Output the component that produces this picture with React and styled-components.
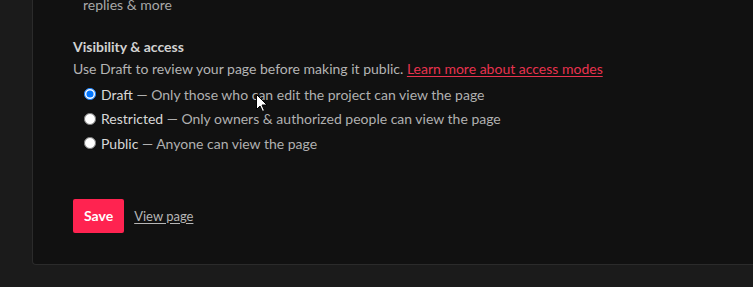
import styled, { createGlobalStyle } from 'styled-components';

const GlobalStyle = createGlobalStyle`
  html, body {
    margin: 0;
    padding: 0;
    background: #1b1b1b;
    font-family: Lato, "Liberation Sans", sans-serif;
    overflow: hidden;
  }
`;

const Page = styled.div`
  position: relative;
  height: 287px;
  padding-left: 32px;
`;

const Card = styled.section`
  background: #111111;
  border: 1px solid #2b2b2b;
  border-top: none;
  border-right: none;
  border-radius: 0 0 0 4px;
  margin-right: -20px;
  padding: 0 0 31px 40px;
  margin-top: -5px;
`;

const Tail = styled.div`
  font-size: 14px;
  line-height: 20px;
  color: #a8a8a8;
  padding-left: 10px;
`;

const Heading = styled.h3`
  margin: 22px 0 0;
  font-size: 14px;
  line-height: 20px;
  font-weight: 700;
  color: #d2d2d2;
`;

const Help = styled.p`
  margin: 2px 0 0;
  font-size: 14px;
  line-height: 20px;
  color: #b4b4b4;
`;

const Link = styled.a`
  color: #e8334f;
  text-decoration: underline;
  text-underline-offset: 2px;
`;

const Options = styled.div`
  margin-top: 3px;
  padding-left: 10px;
`;

const Option = styled.label`
  display: flex;
  align-items: center;
  height: 24.5px;
  font-size: 14px;
  color: #b0b0b0;
  input {
    margin: 0 5px 0 1px;
    width: 12px;
    height: 12px;
  }
  b {
    font-weight: 400;
    color: #d8d8d8;
  }
`;

const Actions = styled.div`
  display: flex;
  align-items: center;
  gap: 10px;
  margin-top: 43px;
`;

const SaveButton = styled.button`
  height: 34px;
  padding: 0 11px;
  border: none;
  border-radius: 2px;
  background: #ff2350;
  color: #ffffff;
  font-family: inherit;
  font-size: 14px;
  font-weight: 700;
`;

const ViewLink = styled.a`
  font-size: 13px;
  color: #b6b6b6;
  text-decoration: underline;
  text-underline-offset: 2px;
`;

const Cursor = styled.svg`
  position: absolute;
  left: 256px;
  top: 99px;
`;

const options = [
  { label: 'Draft', text: 'Only those who can edit the project can view the page', checked: true },
  { label: 'Restricted', text: 'Only owners & authorized people can view the page' },
  { label: 'Public', text: 'Anyone can view the page' },
];

export default function App() {
  return (
    <Page>
      <GlobalStyle />
      <Card>
        <Tail>replies &amp; more</Tail>
        <Heading>Visibility &amp; access</Heading>
        <Help>
          Use Draft to review your page before making it public.{' '}
          <Link href="#">Learn more about access modes</Link>
        </Help>
        <Options>
          {options.map((o) => (
            <Option key={o.label}>
              <input type="radio" name="access" defaultChecked={o.checked} />
              <span>
                <b>{o.label}</b> — {o.text}
              </span>
            </Option>
          ))}
        </Options>
        <Actions>
          <SaveButton>Save</SaveButton>
          <ViewLink href="#">View page</ViewLink>
        </Actions>
      </Card>
      <Cursor width="12" height="19" viewBox="0 0 12 19">
        <path d="M0.5 0.5 L0.5 15.5 L4 12 L6.5 17.5 L8.5 16.5 L6 11 L11 11 Z" fill="#fff" stroke="#000" strokeWidth="1" />
      </Cursor>
    </Page>
  );
}
